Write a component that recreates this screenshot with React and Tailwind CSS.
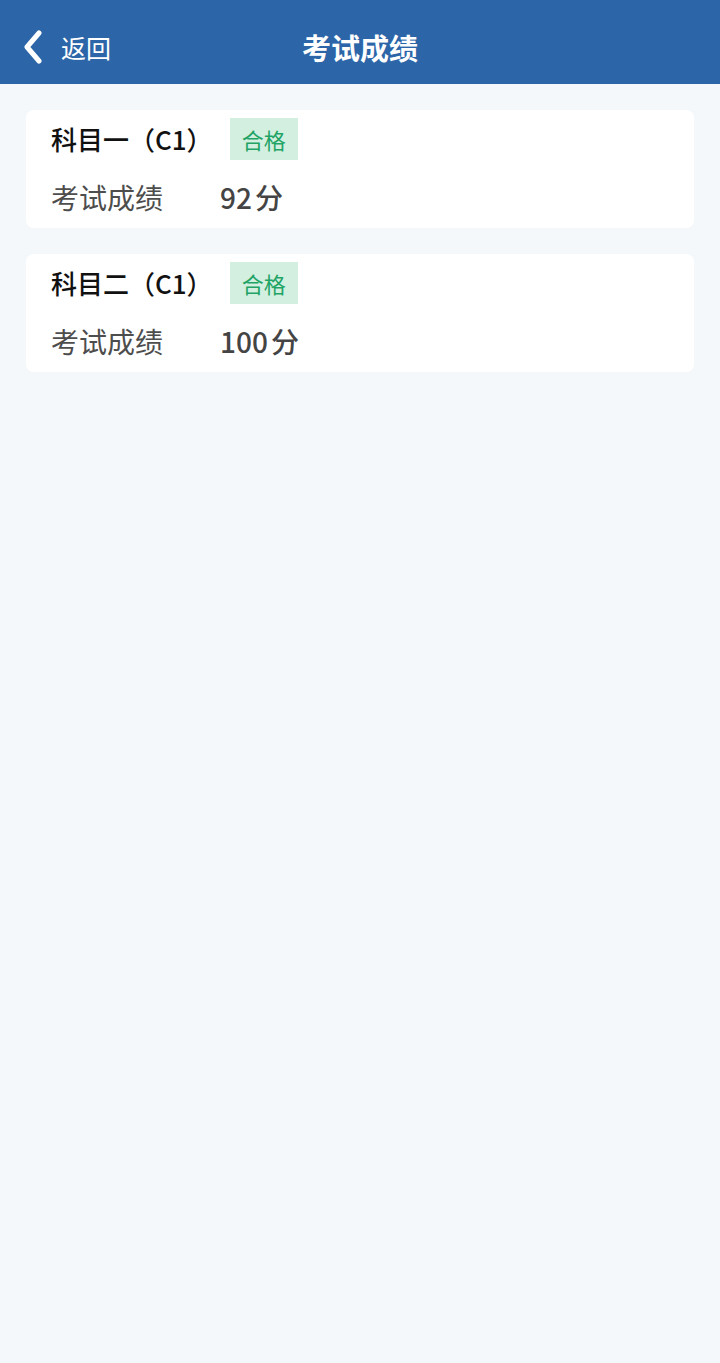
export default function App() {
  const items = [
    { name: "科目一（C1）", score: "92" },
    { name: "科目二（C1）", score: "100" },
  ];
  return (
    <div
      className="w-[720px] min-h-[1363px] bg-[#f4f8fa] flex flex-col"
      style={{ fontFamily: '"Noto Sans CJK SC", "Noto Sans", sans-serif' }}
    >
      <div className="h-[84px] bg-[#2c65a8] flex items-center relative pt-[10px]">
        <div className="flex items-center pl-[22px] text-white">
          <svg width="22" height="34" viewBox="0 0 22 34">
            <path d="M17 3 L5 17 L17 31" fill="none" stroke="white" strokeWidth="5" strokeLinecap="round" strokeLinejoin="round" />
          </svg>
          <span className="ml-[17px] text-[25px] leading-none">返回</span>
        </div>
        <div className="absolute left-0 right-0 text-center text-white text-[29px] font-bold leading-none pointer-events-none">
          考试成绩
        </div>
      </div>
      <div className="flex flex-col gap-[26px] px-[26px] pt-[26px]">
        {items.map((it) => (
          <div key={it.name} className="bg-white rounded-[8px] pl-[25px] pt-[8px] pb-[16px]">
            <div className="flex items-center h-[42px]">
              <span className="text-[26px] leading-none text-[#111] font-medium">{it.name}</span>
              <span className="ml-[17px] h-[42px] px-[12px] flex items-center bg-[#d3efe0] text-[#1fa466] text-[22px] leading-none">
                合格
              </span>
            </div>
            <div className="flex items-center mt-[22px] h-[30px]">
              <span className="w-[169px] text-[28px] leading-none text-[#4d4d4d]">考试成绩</span>
              <span className="text-[28px] leading-none text-[#444] font-medium">
                {it.score}
                <span className="ml-[3px]">分</span>
              </span>
            </div>
          </div>
        ))}
      </div>
    </div>
  );
}
